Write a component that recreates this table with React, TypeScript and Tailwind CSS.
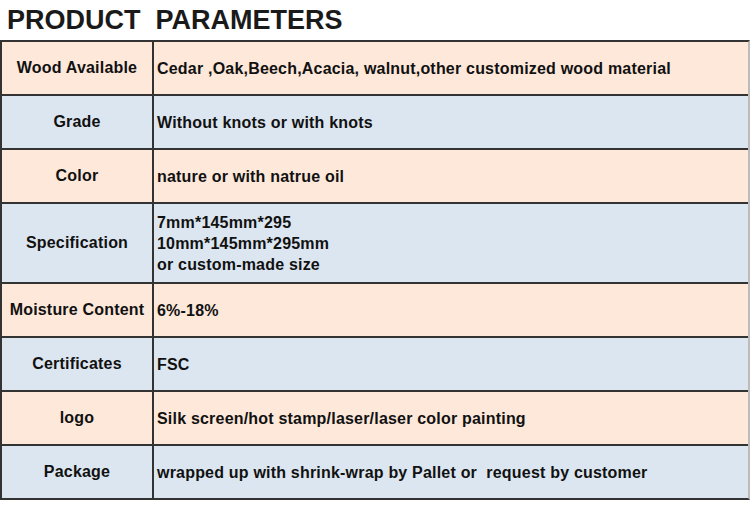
const rows: { label: string; value: string[]; tone: "peach" | "blue"; h: string }[] = [
  { label: "Wood Available", value: ["Cedar ,Oak,Beech,Acacia, walnut,other customized wood material"], tone: "peach", h: "h-[52px]" },
  { label: "Grade", value: ["Without knots or with knots"], tone: "blue", h: "h-[54px]" },
  { label: "Color", value: ["nature or with natrue oil"], tone: "peach", h: "h-[54px]" },
  {
    label: "Specification",
    value: ["7mm*145mm*295", "10mm*145mm*295mm", "or custom-made size"],
    tone: "blue",
    h: "h-[80px]",
  },
  { label: "Moisture Content", value: ["6%-18%"], tone: "peach", h: "h-[54px]" },
  { label: "Certificates", value: ["FSC"], tone: "blue", h: "h-[54px]" },
  { label: "logo", value: ["Silk screen/hot stamp/laser/laser color painting"], tone: "peach", h: "h-[54px]" },
  { label: "Package", value: ["wrapped up with shrink-wrap by Pallet or  request by customer"], tone: "blue", h: "h-[54px]" },
];

export default function App() {
  return (
    <div className="h-[511px] w-[750px] bg-white font-['Liberation_Sans',Arial,sans-serif] text-[#111]">
      <h1 className="whitespace-pre pl-[7px] pt-[2px] text-[27px] font-bold leading-[36px] text-[#1a1a1a]">
        PRODUCT  PARAMETERS
      </h1>
      <div className="mt-[2px] w-[750px] border-y-2 border-l-2 border-r-2 border-y-[#333] border-l-[#333] border-r-[#bbb]">
        {rows.map((row, i) => (
          <div
            key={row.label}
            className={`flex ${row.h} ${i > 0 ? "border-t-2 border-[#333]" : ""} ${
              row.tone === "peach" ? "bg-[#fde8da]" : "bg-[#dce6f0]"
            }`}
          >
            <div className="flex w-[152px] shrink-0 items-center justify-center border-r-2 border-[#333] text-[16px] font-bold tracking-[0.2px]">
              {row.label}
            </div>
            <div className="flex flex-col justify-center whitespace-pre pl-[3px] text-[16px] font-bold leading-[21px] tracking-[0.2px]">
              {row.value.map((line) => (
                <span key={line}>{line}</span>
              ))}
            </div>
          </div>
        ))}
      </div>
    </div>
  );
}
